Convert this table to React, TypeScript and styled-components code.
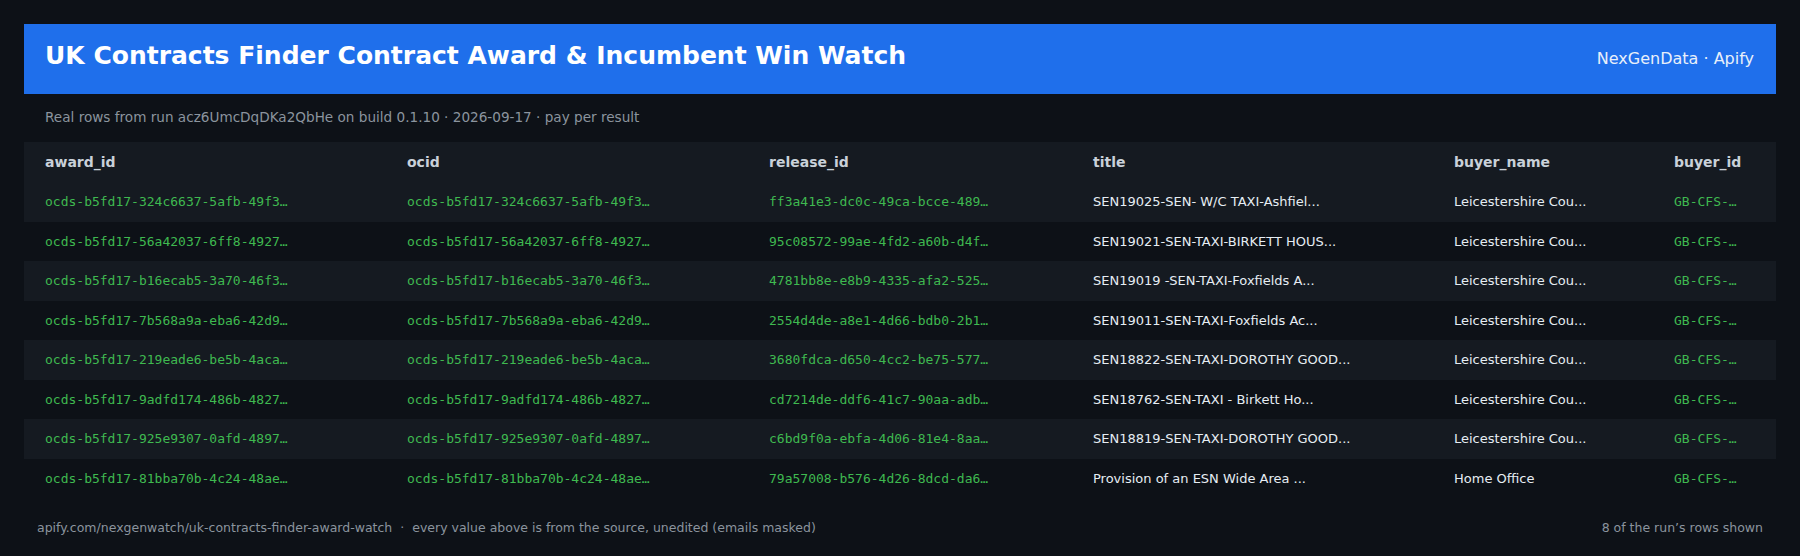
import React from "react";
import styled, { createGlobalStyle } from "styled-components";

const GlobalStyle = createGlobalStyle`
  html, body { margin: 0; padding: 0; background: #0d1117; }
  body { font-family: "DejaVu Sans", "Liberation Sans", sans-serif; }
`;

const Page = styled.div`
  padding: 24px;
  background: #0d1117;
  min-height: 508px;
`;

const HeaderBar = styled.header`
  display: flex;
  justify-content: space-between;
  align-items: baseline;
  padding: 18px 22px 24px 21px;
  background: #1f6feb;
`;

const Title = styled.h1`
  margin: 0;
  font-size: 25px;
  line-height: 28px;
  font-weight: 700;
  color: #ffffff;
`;

const Brand = styled.span`
  font-size: 16px;
  color: #e8effa;
`;

const Subtitle = styled.p`
  margin: 16px 0 17px;
  padding: 0 21px;
  font-size: 13.6px;
  line-height: 15px;
  color: #8b949e;
`;

const Table = styled.table`
  width: 100%;
  border-collapse: collapse;
  table-layout: fixed;
`;

const Col = styled.col<{ $w?: number }>`
  width: ${(p) => (p.$w ? `${p.$w}px` : "auto")};
`;

const HeadRow = styled.tr`
  background: #151a21;
`;

const Th = styled.th`
  text-align: left;
  padding: 0 21px;
  height: 40px;
  font-size: 14px;
  font-weight: 700;
  color: #c9d1d9;
  white-space: nowrap;
`;

const Row = styled.tr<{ $alt: boolean }>`
  background: ${(p) => (p.$alt ? "#151a21" : "#0d1117")};
`;

const Td = styled.td<{ $mono?: boolean }>`
  padding: 0 21px;
  height: 39.5px;
  white-space: nowrap;
  overflow: hidden;
  font-family: ${(p) =>
    p.$mono
      ? '"DejaVu Sans Mono", "Liberation Mono", monospace'
      : '"DejaVu Sans", "Liberation Sans", sans-serif'};
  font-size: 13px;
  color: ${(p) => (p.$mono ? "#3fb950" : "#e6edf3")};
`;

const Footer = styled.footer`
  display: flex;
  justify-content: space-between;
  align-items: center;
  margin-top: 23px;
  padding: 0 13px;
  font-size: 12.5px;
  line-height: 14px;
  color: #8b949e;
`;

const Sep = styled.span`
  margin: 0 8px;
`;

type R = {
  award: string;
  release: string;
  title: string;
  buyer: string;
};

const rows: R[] = [
  { award: "ocds-b5fd17-324c6637-5afb-49f3…", release: "ff3a41e3-dc0c-49ca-bcce-489…", title: "SEN19025-SEN- W/C TAXI-Ashfiel...", buyer: "Leicestershire Cou..." },
  { award: "ocds-b5fd17-56a42037-6ff8-4927…", release: "95c08572-99ae-4fd2-a60b-d4f…", title: "SEN19021-SEN-TAXI-BIRKETT HOUS...", buyer: "Leicestershire Cou..." },
  { award: "ocds-b5fd17-b16ecab5-3a70-46f3…", release: "4781bb8e-e8b9-4335-afa2-525…", title: "SEN19019 -SEN-TAXI-Foxfields A...", buyer: "Leicestershire Cou..." },
  { award: "ocds-b5fd17-7b568a9a-eba6-42d9…", release: "2554d4de-a8e1-4d66-bdb0-2b1…", title: "SEN19011-SEN-TAXI-Foxfields Ac...", buyer: "Leicestershire Cou..." },
  { award: "ocds-b5fd17-219eade6-be5b-4aca…", release: "3680fdca-d650-4cc2-be75-577…", title: "SEN18822-SEN-TAXI-DOROTHY GOOD...", buyer: "Leicestershire Cou..." },
  { award: "ocds-b5fd17-9adfd174-486b-4827…", release: "cd7214de-ddf6-41c7-90aa-adb…", title: "SEN18762-SEN-TAXI - Birkett Ho...", buyer: "Leicestershire Cou..." },
  { award: "ocds-b5fd17-925e9307-0afd-4897…", release: "c6bd9f0a-ebfa-4d06-81e4-8aa…", title: "SEN18819-SEN-TAXI-DOROTHY GOOD...", buyer: "Leicestershire Cou..." },
  { award: "ocds-b5fd17-81bba70b-4c24-48ae…", release: "79a57008-b576-4d26-8dcd-da6…", title: "Provision of an ESN Wide Area ...", buyer: "Home Office" },
];

const columns = ["award_id", "ocid", "release_id", "title", "buyer_name", "buyer_id"];
const widths = [362, 362, 324, 361, 220, 0];

export default function App() {
  return (
    <>
      <GlobalStyle />
      <Page>
        <HeaderBar>
          <Title>UK Contracts Finder Contract Award &amp; Incumbent Win Watch</Title>
          <Brand>NexGenData · Apify</Brand>
        </HeaderBar>
        <Subtitle>
          Real rows from run acz6UmcDqDKa2QbHe on build 0.1.10 · 2026-09-17 · pay per result
        </Subtitle>
        <Table>
          <colgroup>
            {widths.map((w, i) => (
              <Col key={i} $w={w || undefined} />
            ))}
          </colgroup>
          <thead>
            <HeadRow>
              {columns.map((c) => (
                <Th key={c}>{c}</Th>
              ))}
            </HeadRow>
          </thead>
          <tbody>
            {rows.map((r, i) => (
              <Row key={i} $alt={i % 2 === 0}>
                <Td $mono>{r.award}</Td>
                <Td $mono>{r.award}</Td>
                <Td $mono>{r.release}</Td>
                <Td>{r.title}</Td>
                <Td>{r.buyer}</Td>
                <Td $mono>GB-CFS-…</Td>
              </Row>
            ))}
          </tbody>
        </Table>
        <Footer>
          <span>
            apify.com/nexgenwatch/uk-contracts-finder-award-watch
            <Sep>·</Sep>
            every value above is from the source, unedited (emails masked)
          </span>
          <span>8 of the run’s rows shown</span>
        </Footer>
      </Page>
    </>
  );
}
